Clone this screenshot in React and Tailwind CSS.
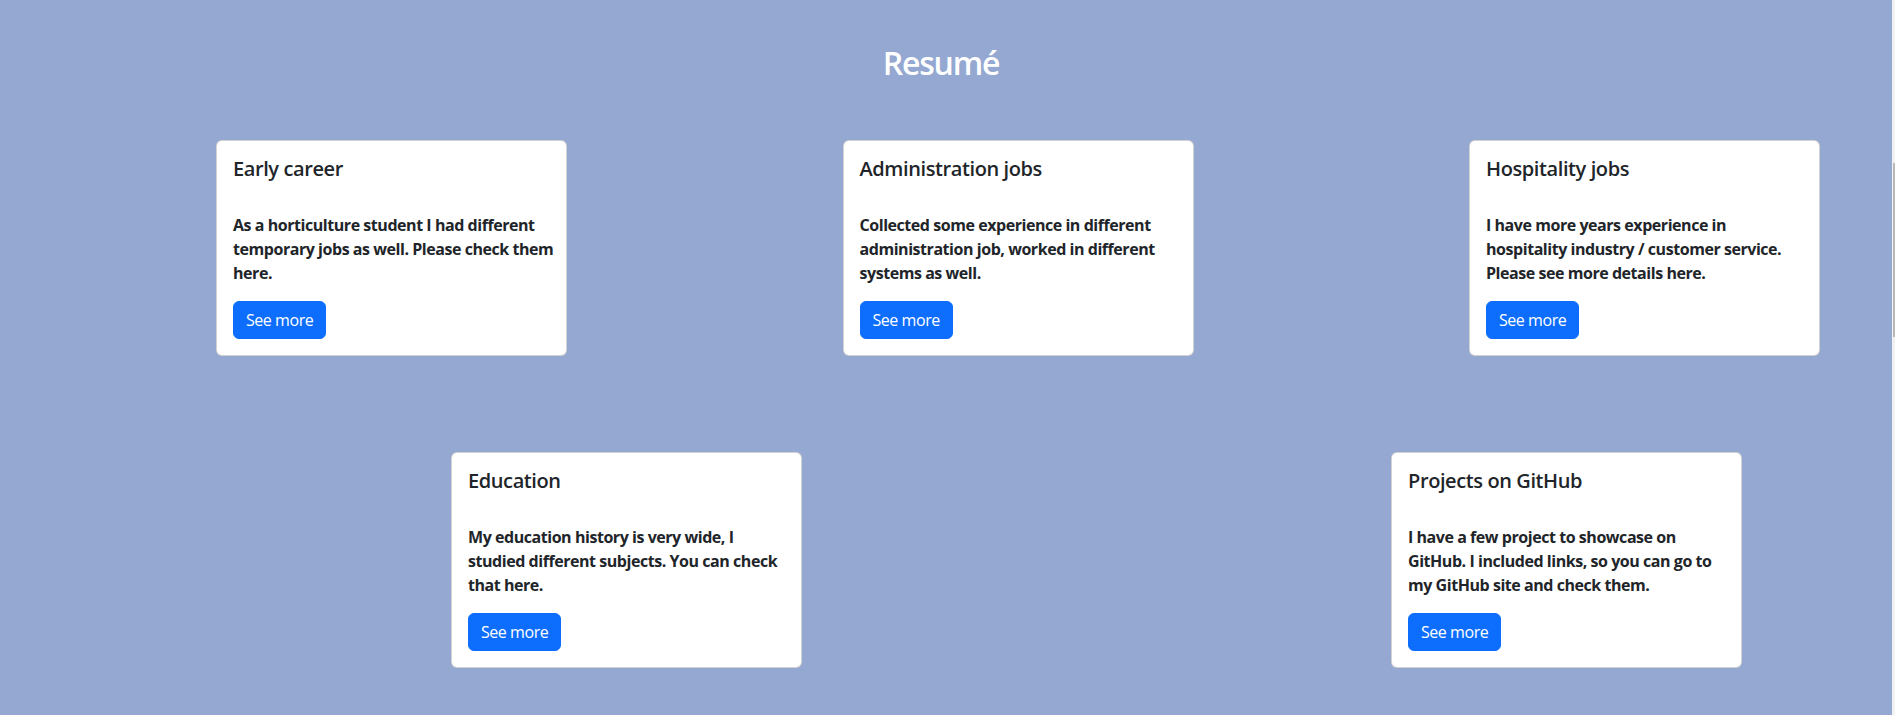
import React from "react";

const cardsRow1 = [
  {
    title: "Early career",
    lines: ["As a horticulture student I had different", "temporary jobs as well. Please check them", "here."],
  },
  {
    title: "Administration jobs",
    lines: ["Collected some experience in different", "administration job, worked in different", "systems as well."],
  },
  {
    title: "Hospitality jobs",
    lines: ["I have more years experience in", "hospitality industry / customer service.", "Please see more details here."],
  },
];

const cardsRow2 = [
  {
    title: "Education",
    lines: ["My education history is very wide, I", "studied different subjects. You can check", "that here."],
  },
  {
    title: "Projects on GitHub",
    lines: ["I have a few project to showcase on", "GitHub. I included links, so you can go to", "my GitHub site and check them."],
  },
];

function Card({ title, lines }) {
  return (
    <div className="w-[351px] shrink-0 bg-white border border-black/[.175] rounded-[6px] p-4 flex flex-col text-[#212529]">
      <h5 className="text-[20px] font-semibold leading-[1.2] mb-2 tracking-[-0.4px]">{title}</h5>
      <p className="mt-6 mb-4 text-[16px] font-bold leading-6 whitespace-nowrap tracking-[-0.45px]">
        {lines.map((l, i) => (
          <React.Fragment key={i}>
            {l}
            {i < lines.length - 1 && <br />}
          </React.Fragment>
        ))}
      </p>
      <button className="self-start bg-[#0d6efd] border border-[#0d6efd] text-white text-[16px] leading-6 px-3 py-[6px] rounded-[6px] font-normal tracking-[-0.45px]">
        See more
      </button>
    </div>
  );
}

export default function App() {
  return (
    <div
      className="h-[715px] w-full flex bg-[#94a8d1] overflow-hidden"
      style={{ fontFamily: "'Open Sans', 'Noto Sans', 'Liberation Sans', sans-serif" }}
    >
      <main className="flex-1 flex flex-col">
        <h2 className="mt-[44px] pr-[10px] text-center text-white text-[32px] font-semibold leading-[1.2] tracking-[-1.2px]">
          Resumé
        </h2>
        <div className="mt-[58px] flex pl-[216px] gap-[275.5px]">
          {cardsRow1.map((c) => (
            <Card key={c.title} {...c} />
          ))}
        </div>
        <div className="mt-[96px] flex pl-[451px] gap-[589px]">
          {cardsRow2.map((c) => (
            <Card key={c.title} {...c} />
          ))}
        </div>
      </main>
      <aside className="w-[3px] shrink-0 bg-[#f1f1f1] flex flex-col">
        <div className="mt-[163px] ml-[1px] w-[2px] h-[174px] bg-[#b8b8b8]" />
      </aside>
    </div>
  );
}
